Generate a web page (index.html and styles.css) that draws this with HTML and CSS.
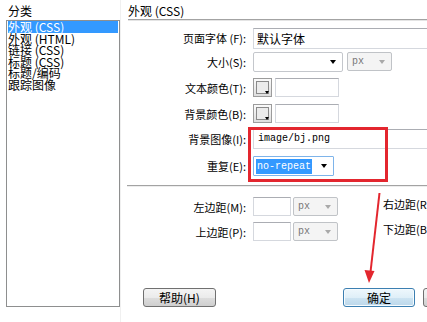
FILE: index.html
```html
<!DOCTYPE html>
<html lang="zh-CN">
<head>
<meta charset="utf-8">
<title>页面属性</title>
<link rel="stylesheet" href="styles.css">
</head>
<body>
<div class="dialog">
  <aside class="cat">
    <div class="cat-title">分类</div>
    <ul class="cat-list">
      <li class="sel">外观 (CSS)</li>
      <li>外观 (HTML)</li>
      <li>链接 (CSS)</li>
      <li>标题 (CSS)</li>
      <li>标题/编码</li>
      <li>跟踪图像</li>
    </ul>
  </aside>

  <section class="panel">
    <div class="panel-title">外观 (CSS)</div>

    <div class="form">
      <div class="lbl">页面字体 (F):</div>
      <div class="ctl"><div class="field font-input">默认字体</div></div>

      <div class="lbl">大小(S):</div>
      <div class="ctl">
        <div class="select size"><span class="val"></span><i class="caret"></i></div>
        <div class="select unit"><span class="val">px</span><i class="caret"></i></div>
      </div>

      <div class="lbl">文本颜色(T):</div>
      <div class="ctl">
        <div class="swatch"><i class="swatch-in"></i><i class="swatch-caret"></i></div>
        <div class="field color-text"></div>
      </div>

      <div class="lbl">背景颜色(B):</div>
      <div class="ctl">
        <div class="swatch"><i class="swatch-in"></i><i class="swatch-caret"></i></div>
        <div class="field color-text"></div>
      </div>

      <div class="lbl">背景图像(I):</div>
      <div class="ctl"><div class="field path">image/bj.png</div></div>

      <div class="lbl">重复(E):</div>
      <div class="ctl">
        <div class="select repeat"><span class="val"><span class="hl">no-repeat</span></span><i class="caret"></i></div>
      </div>
    </div>

    <div class="sep"></div>

    <div class="form form2">
      <div class="lbl">左边距(M):</div>
      <div class="ctl">
        <div class="field small"></div>
        <div class="select unit unit2"><span class="val">px</span><i class="caret"></i></div>
        <div class="side-lbl">右边距(R):</div>
      </div>

      <div class="lbl">上边距(P):</div>
      <div class="ctl">
        <div class="field small"></div>
        <div class="select unit unit2"><span class="val">px</span><i class="caret"></i></div>
        <div class="side-lbl">下边距(B):</div>
      </div>
    </div>

    <div class="buttons">
      <div class="btn help">帮助(H)</div>
      <div class="btn ok">确定</div>
      <div class="btn next">取消</div>
    </div>
  </section>

  <div class="mark-box"></div>
  <svg class="arrow" width="427" height="322" viewBox="0 0 427 322">
    <line x1="379.5" y1="193" x2="370.5" y2="272" stroke="#e3262e" stroke-width="2"/>
    <polygon points="369,283 364.5,270 374.5,271" fill="#e3262e"/>
  </svg>
</div>
</body>
</html>
```

FILE: styles.css
```css
html, body {
  margin: 0;
  padding: 0;
  background: #ffffff;
}

body {
  font-family: "Noto Sans CJK SC", "Noto Sans", sans-serif;
  color: #000;
}

.dialog {
  position: relative;
  display: flex;
  width: 427px;
  height: 322px;
  overflow: hidden;
  background: #fff;
}

/* ---------- left category list ---------- */
.cat {
  width: 120px;
  flex-shrink: 0;
  padding-left: 6px;
  box-sizing: border-box;
}

.cat-title {
  padding: 2px 0 0 2px;
  height: 18px;
  line-height: 18px;
  font-size: 12px;
}

.cat-list {
  list-style: none;
  margin: 0;
  padding: 0 1px;
  width: 114px;
  height: 287px;
  box-sizing: border-box;
  border: 1px solid #8e8f8f;
  font-size: 12px;
}

.cat-list li {
  line-height: 11.4px;
  height: 11.4px;
  white-space: nowrap;
}

.cat-list li.sel {
  background: #3399ff;
  color: #fff;
  height: 12px;
  line-height: 12px;
}

/* ---------- right panel ---------- */
.panel {
  flex: 1;
  min-width: 0;
  overflow: hidden;
  border-left: 1px solid #f0f0f0;
}

.panel-title {
  margin-left: 7px;
  padding-top: 2px;
  height: 17px;
  line-height: 17px;
  font-size: 12px;
  border-bottom: 1px solid #a3a3a3;
  box-shadow: 0 1px 0 #e4e4e4;
  white-space: nowrap;
}

.form {
  display: grid;
  grid-template-columns: 125px 1fr;
  column-gap: 7px;
  grid-template-rows: 24px 26px 26px 25px 27px 20px;
  margin-top: 8px;
}

.form2 {
  grid-template-rows: 25px 19px;
  margin-top: 10px;
}

.lbl {
  text-align: right;
  font-size: 11px;
  line-height: 20px;
  white-space: nowrap;
}

.ctl {
  display: flex;
  align-items: flex-start;
  min-width: 0;
}

.field {
  flex-shrink: 0;
  height: 19px;
  box-sizing: border-box;
  border: 1px solid #d5d8de;
  border-top-color: #abadb3;
  background: #fff;
  white-space: nowrap;
}

.font-input {
  width: 220px;
  height: 21px;
  padding-left: 3px;
  font-size: 12px;
  line-height: 19px;
}

.color-text {
  width: 64px;
  margin-left: 3px;
}

.path {
  width: 220px;
  height: 20px;
  padding-left: 4px;
  font-family: "Liberation Mono", monospace;
  font-size: 10px;
  line-height: 18px;
}

.small {
  width: 38px;
}

/* selects */
.select {
  flex-shrink: 0;
  display: flex;
  align-items: center;
  justify-content: space-between;
  box-sizing: border-box;
  height: 20px;
  border: 1px solid #c4c7cc;
  border-radius: 2px;
  background: #fff;
  padding: 0 6px 0 3px;
}

.caret {
  display: block;
  width: 0;
  height: 0;
  border-left: 3.5px solid transparent;
  border-right: 3.5px solid transparent;
  border-top: 4px solid #000;
}

.size {
  width: 90px;
}

.unit {
  width: 45px;
  height: 19px;
  margin-left: 4px;
  background: #f4f4f4;
  border-color: #c0c3c7;
  padding-left: 4px;
}

.unit .val {
  font-family: "Liberation Mono", monospace;
  font-size: 10px;
  color: #777;
}

.unit .caret {
  border-top-color: #a9a9a9;
}

.unit2 {
  margin-left: 2px;
}

.repeat {
  width: 81px;
  border-color: #7eb4ea;
  border-radius: 1px;
  padding-left: 2px;
}

.repeat .val {
  font-family: "Liberation Mono", monospace;
  font-size: 10px;
  line-height: 15px;
}

.hl {
  display: inline-block;
  background: #3399ff;
  color: #fff;
  padding: 0 1px;
  height: 15px;
}

/* colour swatch button */
.swatch {
  flex-shrink: 0;
  position: relative;
  width: 19px;
  height: 19px;
  box-sizing: border-box;
  border: 1px solid #9c9c9c;
  background: linear-gradient(#fbfbfb, #dedede);
}

.swatch-in {
  display: block;
  margin: 2px 0 0 2px;
  width: 11px;
  height: 11px;
  border: 1px solid #8a8a8a;
  background: #ececec;
}

.swatch-caret {
  position: absolute;
  right: 2px;
  bottom: 2px;
  width: 0;
  height: 0;
  border-left: 2.5px solid transparent;
  border-right: 2.5px solid transparent;
  border-top: 3px solid #000;
}

.side-lbl {
  margin-left: 45px;
  font-size: 11px;
  line-height: 15px;
  white-space: nowrap;
}

.sep {
  margin: 9px 0 0 6px;
  border-top: 1px solid #a3a3a3;
  border-bottom: 1px solid #ededed;
}

/* buttons */
.buttons {
  display: flex;
  margin-top: 47px;
  padding-left: 22px;
}

.btn {
  flex-shrink: 0;
  width: 73px;
  height: 19px;
  box-sizing: border-box;
  border: 1px solid #707070;
  border-radius: 3px;
  background: linear-gradient(#f4f4f4 0%, #ebebeb 50%, #dddddd 51%, #cfcfcf 100%);
  font-size: 12px;
  line-height: 17px;
  text-align: center;
  white-space: nowrap;
}

.ok {
  width: 72px;
  margin-left: 127px;
  border-color: #3c7fb1;
  background: linear-gradient(#eef7fc 0%, #dfeff8 50%, #cde4f2 51%, #bcd7ea 100%);
  box-shadow: inset 0 0 0 1px #f6fbfe;
}

.next {
  margin-left: 8px;
}

/* annotations */
.mark-box {
  position: absolute;
  left: 248px;
  top: 127px;
  width: 140px;
  height: 55px;
  box-sizing: border-box;
  border: 3px solid #e3262e;
}

.arrow {
  position: absolute;
  left: 0;
  top: 0;
  pointer-events: none;
}
```
